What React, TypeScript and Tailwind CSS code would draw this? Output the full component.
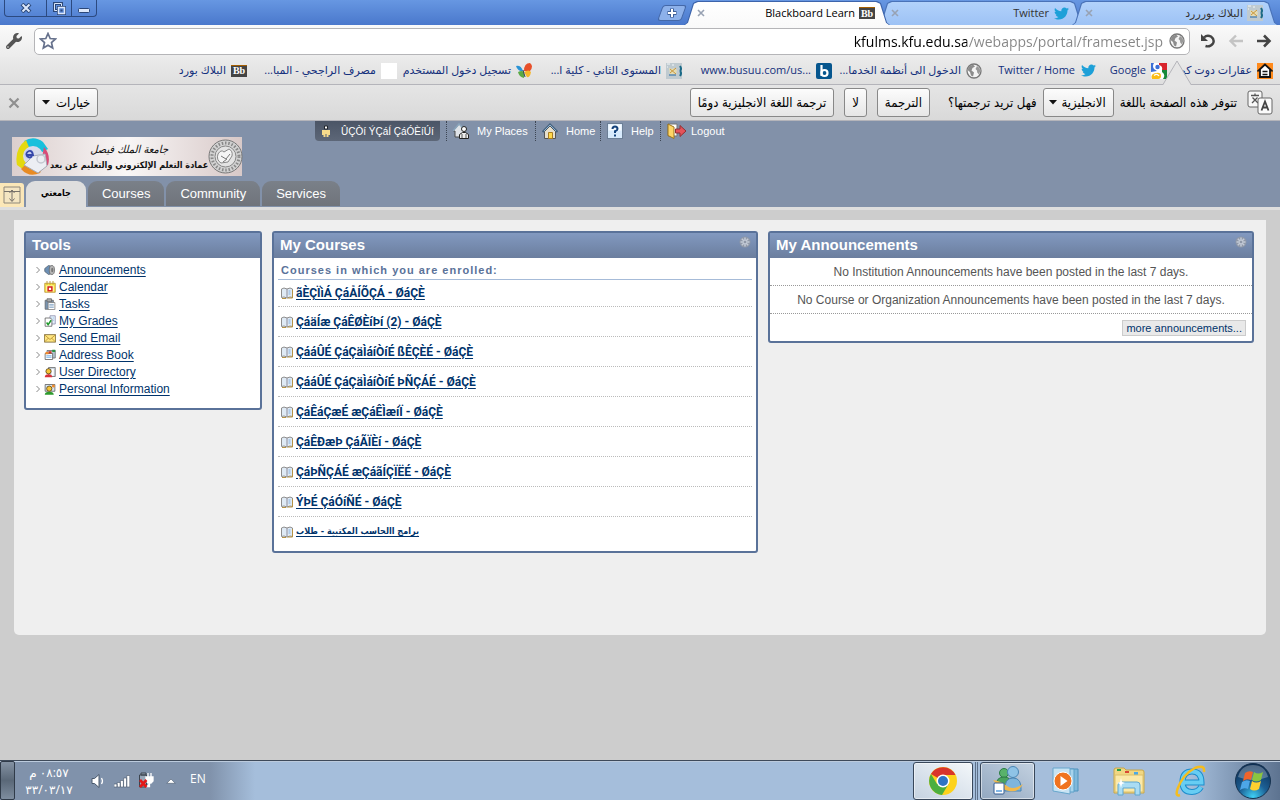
import type { ReactNode } from "react";
import { FaTwitter, FaWrench } from "react-icons/fa";

/* ---------- small icons ---------- */

const Svg = ({ size = 16, children }: { size?: number; children: ReactNode }) => (
  <svg width={size} height={size} viewBox="0 0 16 16" className="shrink-0" aria-hidden="true">
    {children}
  </svg>
);

const BbIcon = () => (
  <span
    aria-hidden="true"
    className="flex h-3 w-4 shrink-0 items-center justify-center border-t border-yellow-700 bg-[#444] font-['Liberation_Serif',serif] text-[10px] leading-3 font-bold text-white"
  >
    Bb
  </span>
);

const GlobeIcon = () => (
  <Svg>
    <circle cx="8" cy="8" r="7" fill="#f4f4f4" stroke="#777" strokeWidth="1.3" />
    <path d="M3 3.500 7 1.500l2 2-2.500 1.500L5.500 7.500 8 9.500 7 13.500 5 12.500 4 9 1.500 7z" fill="#8c8c8c" />
    <path d="m11 3 2.500 2 .8 3-1.300 3.500-1.800-2-.2-2-1.500-1.500z" fill="#999" />
  </Svg>
);

const SchoolIcon = () => (
  <Svg>
    <rect width="16" height="16" fill="#bfcad0" />
    <path d="m3 5 3 1 2-1 3 2-1 5H4z" fill="#e4dcb4" />
    <path d="m4 10 6-5M4 6l6 5" stroke="#c9973c" />
    <path d="M14 3q2 3 0 5M14 8q2 2 0 5" stroke="#1b6a87" strokeWidth="2" fill="none" />
    <path d="M3 12h7" stroke="#5687b4" strokeWidth="1.500" />
    <path d="M1 1h3M6 2h2M1 4h1" stroke="#f3f7f8" />
  </Svg>
);

const HouseBadge = () => (
  <Svg>
    <rect width="16" height="16" fill="#ff8a1c" />
    <path d="M8 1.500 1.500 7.500H3V14h10V7.500h1.500z" fill="#fff" stroke="#151515" strokeWidth="1.800" />
    <path d="M5.500 8.500h5M5.500 11.500h5" stroke="#151515" strokeWidth="1.600" />
  </Svg>
);

const GoogleIcon = () => (
  <Svg>
    <rect width="16" height="16" rx="1" fill="#fff" />
    <path d="M0 0h3Q1 3 3 6l3 2-6 1z" fill="#3b6fd6" />
    <path d="M8 0h8v7h-5Q12 3 8 2z" fill="#d8242c" />
    <path d="M11 7h5v9h-4q3-4-1-7z" fill="#17893a" />
    <path d="M1 16q-2-5 4-6 5-1 5 3 0 3-3 3z" fill="#fbbc14" />
    <circle cx="6.500" cy="4" r="2.200" fill="#3b6fd6" />
    <path d="M3 12.500q3-2.500 5 .5" fill="none" stroke="#fff" strokeWidth="1.200" />
  </Svg>
);

const BusuuIcon = () => (
  <Svg>
    <rect width="16" height="16" rx="2" fill="#06568e" />
    <path d="M5.500 2v11" stroke="#fff" strokeWidth="2.200" />
    <circle cx="8.500" cy="10" r="3" fill="none" stroke="#fff" strokeWidth="2.200" />
  </Svg>
);

const ButterflyIcon = () => (
  <Svg>
    <path d="M0 3q5-1 7 5-5 1-7-5z" fill="#2a93d5" />
    <path d="M8 8Q8 0 14 0q4 3 0 8z" fill="#e8502a" />
    <path d="M8 9q5-3 7 0-1 6-4 5z" fill="#f5b72b" />
    <path d="M2 9q4-2 6 0v6q-5-1-6-6z" fill="#5ba944" />
    <path d="m7 7 2 7" stroke="#345" />
  </Svg>
);

const TranslateIcon = () => (
  <svg width="26" height="26" viewBox="0 0 26 26" className="shrink-0" aria-hidden="true">
    <rect x="1" y="1" width="14" height="16" rx="2" fill="#f8f8f8" stroke="#666" />
    <path d="M4 5.500h8M8 3.500v2M5.500 7.500 11 13M10.500 7.500 5 13" stroke="#555" strokeWidth="1.300" fill="none" />
    <rect x="11" y="8" width="14" height="16" rx="2" fill="#fafafa" stroke="#666" />
    <path d="m14.500 20.500 3.500-9 3.500 9M16 17.500h4" stroke="#444" strokeWidth="1.800" fill="none" />
  </svg>
);

const CloseX = () => (
  <svg width="8" height="8" viewBox="0 0 8 8" aria-hidden="true">
    <path d="m1 1 6 6M7 1 1 7" stroke="currentColor" strokeWidth="1.600" />
  </svg>
);

const Caret = () => (
  <svg width="8" height="5" viewBox="0 0 8 5" className="shrink-0" aria-hidden="true">
    <path d="M0 0h8L4 4.500z" fill="#111" />
  </svg>
);

const Bullet = () => (
  <svg width="4" height="8" viewBox="0 0 4 8" className="shrink-0" aria-hidden="true">
    <path d="m.5 1 3 3-3 3" fill="none" stroke="#888" />
  </svg>
);

const Gear = () => (
  <svg width="12" height="12" viewBox="0 0 12 12" aria-hidden="true">
    <circle cx="6" cy="6" r="5.500" fill="#8f98a8" />
    <path d="M6 1.500v9M1.500 6h9M2.800 2.800l6.400 6.400M9.200 2.800 2.800 9.200" stroke="#c3cad6" strokeWidth="1.500" />
    <circle cx="6" cy="6" r="1.300" fill="#8f98a8" />
  </svg>
);

const BookIcon = () => (
  <svg width="12" height="12" viewBox="0 0 12 12" className="shrink-0" aria-hidden="true">
    <path d="M.5 2 3 1l3 1 3-1 2.500 1v8.500L9 10l-3 1-3-1-2.500.5z" fill="#dfeaf5" stroke="#8d8d8d" />
    <path d="M11.500 3v8H6.500" fill="none" stroke="#b59243" />
    <path d="M6 2v8.500" stroke="#8c8c9a" />
    <path d="M7.500 3h2v5h-2z" fill="#b0cdea" />
    <path d="M1 11.500h4" stroke="#b59243" />
  </svg>
);

const MyPlacesIcon = () => (
  <Svg>
    <path d="m0 8 6-7 6 6v7H2V8z" fill="#dfe3e8" stroke="#4a4a4a" />
    <path d="m0 8 6-7 7 7" fill="none" stroke="#8ba6bd" strokeWidth="1.500" />
    <circle cx="11" cy="6" r="2.500" fill="#fff" stroke="#222" />
    <path d="M6.500 15.500v-4l3-2h3l3 2v4z" fill="#eee" stroke="#222" />
    <path d="M9 11v4m4-4v4" stroke="#555" />
  </Svg>
);

const HomeIcon = () => (
  <Svg>
    <path d="M2.500 8.500 8 3l5.500 5.500v7h-11z" fill="#e6dfcd" stroke="#555" />
    <path d="m.5 9 7.500-7.500L15.500 9" fill="none" stroke="#45627e" strokeWidth="2" />
    <path d="m2 8 6-6 6 6" fill="none" stroke="#8fb3d3" />
    <path d="M6.500 9.500h4v6h-4z" fill="#ffd84a" stroke="#a97c20" />
  </Svg>
);

const HelpIcon = () => (
  <Svg>
    <rect x=".5" y=".5" width="15" height="15" fill="#d7eafc" stroke="#6c7f96" />
    <path d="M1.500 1.500h13v6h-13z" fill="#f4faff" />
    <path d="M5.500 6q0-2.500 2.500-2.500T10.500 6q0 1.300-2.500 2.300V10" fill="none" stroke="#13427c" strokeWidth="2" />
    <path d="M7 11.500h2v2H7z" fill="#13427c" />
  </Svg>
);

const LogoutIcon = () => (
  <svg width="20" height="16" viewBox="0 0 20 16" className="shrink-0" aria-hidden="true">
    <path d="M1 1h9v12H1z" fill="#fff" stroke="#777" />
    <path d="m1 1 6 3v11.500L1 12.500z" fill="#ffd667" stroke="#9b741f" />
    <path d="M8.500 6H13V2.500l6 5.500-6 5.500V10H8.500z" fill="#e5535a" stroke="#8e3034" />
  </svg>
);

const PersonIcon = () => (
  <svg width="10" height="12" viewBox="0 0 10 12" className="shrink-0" aria-hidden="true">
    <path d="M3.500 1h3v3h-3z" fill="#fff" stroke="#20242b" />
    <path d="M1 5h8v5H7.500v2h-2V9h-1v3h-2v-2H1z" fill="#f6da8b" />
  </svg>
);

const toolIcons: Record<string, ReactNode> = {
  Announcements: (
    <>
      <path d="m1 6 5-4 4 1v10l-4 1-5-4z" fill="#6b8fb5" stroke="#56606b" />
      <ellipse cx="10.500" cy="8" rx="3.500" ry="6" fill="#b7b7b7" stroke="#666" />
      <ellipse cx="11" cy="8" rx="1.500" ry="3" fill="#777" />
    </>
  ),
  Calendar: (
    <>
      <path d="M1 3h14v12H1z" fill="#fce94b" stroke="#b18a2c" />
      <path d="M4 0v5m4-5v5m4-5v5" stroke="#bb9c3c" strokeWidth="1.300" />
      <path d="M3 6h10v8H3z" fill="#fff6b0" />
      <path d="M5.500 8h5v5h-5z" fill="#fff" stroke="#d52121" strokeWidth="2" />
    </>
  ),
  Tasks: (
    <>
      <path d="M1.500 3h11v12h-11z" fill="#7994b0" stroke="#666" />
      <path d="M4 1h6v4H4z" fill="#aaa" stroke="#666" />
      <path d="M5.500 6h9v9.500h-9z" fill="#fff" stroke="#777" />
      <path d="M7 8.500h6M7 10.500h6M7 12.500h6" stroke="#6d96bd" />
    </>
  ),
  "My Grades": (
    <>
      <path d="M8 1h7v11H8z" fill="#e4f0fb" stroke="#88a" />
      <path d="M10 4h4M10 7h4" stroke="#6aa1d6" strokeDasharray="1 1" />
      <path d="M1.500 4h7l2 2v9h-9z" fill="#fff" stroke="#555" />
      <path d="m3.500 10 2 3 4-6" fill="none" stroke="#1f9a2b" strokeWidth="2" />
    </>
  ),
  "Send Email": (
    <>
      <path d="M.5 3.500h15v10H.5z" fill="#ffe680" stroke="#6a5628" />
      <path d="m1 4 7 6 7-6M1 13l5-5m9 5-5-5" fill="none" stroke="#b38a2b" />
    </>
  ),
  "Address Book": (
    <>
      <path d="M4 2h11v10H4z" fill="#b5c4d2" stroke="#666" />
      <path d="M1.500 6h10v8h-10z" fill="#fff" stroke="#555" />
      <path d="M6 3h4v3H6z" fill="#d33a26" />
      <path d="M11 1h4v3h-4z" fill="#2c9142" />
      <path d="M2 4h4v3H2z" fill="#f08a2a" />
      <path d="M3 9h7M3 11h7" stroke="#4f9ee0" />
    </>
  ),
  "User Directory": (
    <>
      <path d="M6 2h9v12H6z" fill="#c8d3dd" stroke="#666" />
      <path d="M10 4h3v9h-3z" fill="#fff" />
      <circle cx="6" cy="7" r="3.500" fill="#f6c437" stroke="#4e3a10" />
      <path d="M1 15q0-4 5-4t5 4z" fill="#d8323a" />
    </>
  ),
  "Personal Information": (
    <>
      <path d="M1.500 2h13v9h-13z" fill="#d9e6f3" stroke="#555" />
      <circle cx="12.500" cy="4" r="2" fill="#f08a2a" />
      <circle cx="7" cy="7.500" r="3.500" fill="#f6c437" stroke="#4e3a10" />
      <path d="M1 15.500q0-4 6-4t6 4z" fill="#2e9b2e" />
    </>
  ),
};

/* ---------- browser window ---------- */

const browserTabs = [
  { title: "البلاك بورررد", icon: <SchoolIcon />, active: false, z: "z-10" },
  { title: "Twitter", icon: <FaTwitter size={15} color="#1da0d8" />, active: false, z: "z-0" },
  { title: "Blackboard Learn", icon: <BbIcon />, active: true, z: "z-20" },
];

const tabClip = "[clip-path:polygon(0_100%,3px_90%,9px_8%,13px_0,calc(100%_-_13px)_0,calc(100%_-_9px)_8%,calc(100%_-_3px)_90%,100%_100%)]";

const TabStrip = () => (
  <div className="flex h-[25px] items-end bg-gradient-to-b from-[#6797e2] to-[#4a78cc] pr-[2px] pl-1">
    {browserTabs.map((tab) => (
      <div key={tab.title} className={`relative flex h-6 w-[206px] items-center gap-1 pr-[15px] pl-[13px] not-first:-mr-3 ${tab.z}`}>
        <span className={`absolute inset-0 ${tab.active ? "bg-[#3d64ab]" : "bg-[#4a73b8]"} ${tabClip}`} />
        <span
          className={`absolute inset-x-px top-px bottom-0 ${tab.active ? "bg-gradient-to-b from-white to-[#fafafa]" : "bg-gradient-to-b from-[#b2d2fb] to-[#9dc2f5]"} ${tabClip}`}
        />
        <span className="relative flex w-4 shrink-0 justify-center">{tab.icon}</span>
        <span className={`relative grow text-[11px] whitespace-nowrap ${tab.active ? "text-black" : "text-[#333]"}`}>{tab.title}</span>
        <button aria-label="إغلاق" className="relative text-[#98a2b3]">
          <CloseX />
        </button>
      </div>
    ))}
    <button aria-label="علامة تبويب جديدة" className="mb-1 flex h-4 w-6 -skew-x-[20deg] items-center justify-center rounded-[3px] border border-[#4468a8] bg-[#8db1ea]">
      <svg width="10" height="10" viewBox="0 0 10 10" className="skew-x-[20deg]" aria-hidden="true">
        <path d="M5 .5v9M.5 5h9" stroke="#3f5f96" strokeWidth="4" />
        <path d="M5 1v8M1 5h8" stroke="#fff" strokeWidth="2" />
      </svg>
    </button>
    <div className="mr-auto flex h-[17px] self-start overflow-hidden rounded-b-[4px] border border-t-0 border-[#2c4a80] text-[#2b4778]">
      <button aria-label="تصغير" className="flex w-[25px] items-end justify-center border-l border-[#2c4a80] pb-[3px]">
        <svg width="12" height="5" viewBox="0 0 12 5" aria-hidden="true">
          <rect x=".5" y=".5" width="11" height="4" rx="1" fill="#dce8fb" stroke="currentColor" />
        </svg>
      </button>
      <button aria-label="استعادة" className="flex w-[25px] items-center justify-center border-l border-[#2c4a80]">
        <svg width="13" height="13" viewBox="0 0 13 13" aria-hidden="true">
          <path d="M1.500 1.500h7v7h-7z" fill="none" stroke="currentColor" strokeWidth="3" />
          <path d="M1.500 1.500h7v7h-7z" fill="none" stroke="#dce8fb" />
          <path d="M5.500 5.500h6v6h-6z" fill="#5c8ad8" stroke="currentColor" strokeWidth="3" />
          <path d="M5.500 5.500h6v6h-6z" fill="#5c8ad8" stroke="#dce8fb" strokeWidth="1.500" />
          <path d="M7.500 7.500h2v2h-2z" fill="currentColor" />
        </svg>
      </button>
      <button aria-label="إغلاق النافذة" className="flex w-[41px] items-center justify-center">
        <svg width="12" height="10" viewBox="0 0 12 10" aria-hidden="true">
          <path d="m2 1 8 8m0-8-8 8" stroke="currentColor" strokeWidth="4" />
          <path d="m2.500 1.500 7 7m0-7-7 7" stroke="#dce8fb" strokeWidth="2" />
        </svg>
      </button>
    </div>
  </div>
);

const Toolbar = () => (
  <div className="flex h-8 items-center bg-gradient-to-b from-[#fafafa] to-[#ececec] px-1">
    <button aria-label="التالي" className="flex w-6 justify-center">
      <svg width="16" height="14" viewBox="0 0 16 14" aria-hidden="true">
        <path d="M1 7h12M8 1.500 13.500 7 8 12.500" fill="none" stroke="#444" strokeWidth="2.600" />
      </svg>
    </button>
    <button aria-label="السابق" className="flex w-8 justify-center">
      <svg width="16" height="14" viewBox="0 0 16 14" aria-hidden="true">
        <path d="M15 7H3m5-5.500L2.500 7 8 12.500" fill="none" stroke="#c4c4c4" strokeWidth="2.400" />
      </svg>
    </button>
    <button aria-label="تحديث" className="ml-[6px] flex w-6 justify-center">
      <svg width="16" height="16" viewBox="0 0 16 16" aria-hidden="true">
        <path d="M4 4.500q3-3 7-1 4 3 2 7-3 4-7.500 2.500" fill="none" stroke="#444" strokeWidth="2.400" />
        <path d="M1 1v7h7z" fill="#444" />
      </svg>
    </button>
    <div className="flex h-[27px] grow items-center gap-1 rounded-[5px] border border-[#b5b5b8] bg-white px-1">
      <GlobeIcon />
      <input
        aria-label="العنوان"
        dir="ltr"
        defaultValue="kfulms.kfu.edu.sa/webapps/portal/frameset.jsp"
        className="min-w-0 grow bg-[linear-gradient(to_left,#858585_198px,#000_198px)] bg-clip-text pr-[2px] text-right text-[14px] text-transparent outline-none"
      />
      <button aria-label="إشارة مرجعية">
        <svg width="18" height="18" viewBox="0 0 18 18" aria-hidden="true">
          <path d="m9 1.500 2.200 5 5.300.5-4 3.600 1.200 5.400L9 13.200 4.300 16l1.200-5.400-4-3.600 5.300-.5z" fill="#fff" stroke="#66718c" strokeWidth="1.700" />
        </svg>
      </button>
    </div>
    <button aria-label="أدوات" className="flex w-[30px] items-center justify-center pr-[10px] text-[#555]">
      <FaWrench size={16} className="-scale-x-100 rotate-90" />
    </button>
  </div>
);

const bookmarks = [
  { title: "عقارات دوت كو", icon: <HouseBadge />, width: "w-[106px]" },
  { title: "Google", icon: <GoogleIcon />, width: "w-[71px]" },
  { title: "Twitter / Home", icon: <FaTwitter size={15} color="#1da0d8" />, width: "w-[114px]" },
  { title: "الدخول الى أنظمة الخدما...", icon: <GlobeIcon />, width: "w-[150px]" },
  { title: "www.busuu.com/us...", icon: <BusuuIcon />, width: "w-[150px]", ltr: true },
  { title: "المستوى الثاني - كلية ا...", icon: <SchoolIcon />, width: "w-[150px]" },
  { title: "تسجيل دخول المستخدم", icon: <ButterflyIcon />, width: "w-[135px]" },
  { title: "مصرف الراجحي - المبا...", icon: <span className="size-4 bg-white" />, width: "w-[150px]" },
  { title: "البلاك بورد", icon: <BbIcon />, width: "w-[80px]" },
];

const BookmarksBar = () => (
  <nav aria-label="الإشارات المرجعية" className="flex h-[27px] items-center overflow-hidden bg-gradient-to-b from-[#ebebeb] to-[#dfdfdf] pr-[7px]">
    {bookmarks.map((mark) => (
      <a key={mark.title} href="#" className={`flex shrink-0 items-center gap-[5px] text-[11px] whitespace-nowrap text-[#14307c] ${mark.width}`}>
        <span className="flex w-4 shrink-0 justify-center">{mark.icon}</span>
        <span dir={mark.ltr ? "ltr" : undefined}>{mark.title}</span>
      </a>
    ))}
  </nav>
);

const barButton = "flex h-[29px] items-center rounded-[3px] border border-[#888] bg-gradient-to-b from-[#fcfcfc] to-[#e6e6e6] px-[7px] whitespace-nowrap";

const TranslateBar = () => (
  <div className="relative flex h-[37px] items-center border-y border-[#b4b4ba] bg-gradient-to-b from-[#e5e5e5] to-[#d9d9d9] pr-[7px] pl-2 font-['DejaVu_Sans_Condensed','DejaVu_Sans',sans-serif] text-[13px] text-black">
    <svg width="28" height="25" viewBox="0 0 28 25" className="absolute -top-[25px] right-[89px]" aria-hidden="true">
      <path d="M0 25 14 1l14 24z" fill="#e5e5e5" />
      <path d="M0 24.500 14 1l14 23.500" fill="none" stroke="#b4b4ba" />
    </svg>
    <TranslateIcon />
    <label htmlFor="page-language" className="mr-[10px] whitespace-nowrap">
      تتوفر هذه الصفحة باللغة
    </label>
    <span className="relative mr-[6px] flex items-center">
      <select id="page-language" className={`${barButton} w-[71px] appearance-none`}>
        <option>الانجليزية</option>
      </select>
      <span className="pointer-events-none absolute left-[6px]">
        <Caret />
      </span>
    </span>
    <span className="mr-[6px] whitespace-nowrap">فهل تريد ترجمتها؟</span>
    <button className={`${barButton} mr-[18px]`}>الترجمة</button>
    <button className={`${barButton} mr-[10px]`}>لا</button>
    <button className={`${barButton} mr-[10px]`}>ترجمة اللغة الانجليزية دومًا</button>
    <button className={`${barButton} mr-auto gap-[6px]`}>
      خيارات
      <Caret />
    </button>
    <button aria-label="إغلاق" className="mr-[14px] text-[#909090]">
      <svg width="12" height="12" viewBox="0 0 12 12" aria-hidden="true">
        <path d="m1.500 1.500 9 9m0-9-9 9" stroke="currentColor" strokeWidth="2.200" />
      </svg>
    </button>
  </div>
);

/* ---------- portal ---------- */

const Logo = () => (
  <div className="flex h-[39px] w-[230px] items-center justify-between bg-gradient-to-r from-[#dccfce] via-[#f8f6f6] to-[#d8c9c8] px-1">
    <svg width="34" height="39" viewBox="0 0 34 39" className="shrink-0" aria-hidden="true">
      <path d="M17 20 8 4Q18-2 27 5l5 7z" fill="#17c0dc" />
      <path d="M17 20 10 3Q-2 12 1 28l7 5z" fill="#e3d90f" />
      <path d="M17 20 5 32q8 9 19 4l4-8z" fill="#e88b23" />
      <path d="m28 10q7 8 4 18l-8 3z" fill="#d84b78" />
      <circle cx="17" cy="19" r="10" fill="#d7dbea" />
      <path d="m17 19 12-2 2 12-9 7-14-8z" fill="#eceef3" stroke="#a6abb8" />
      <circle cx="13" cy="17" r="5" fill="#c6cdf2" />
      <path d="M10 18h7q-1-5-4-4-4 2-2 5 3 3 5 0" fill="none" stroke="#3446a8" strokeWidth="1.800" />
      <circle cx="25" cy="22" r="4" fill="none" stroke="#c3c7d0" strokeWidth="1.500" />
    </svg>
    <div className="flex flex-col items-center font-['DejaVu_Sans_Condensed','DejaVu_Sans',sans-serif] whitespace-nowrap text-[#111]" dir="rtl">
      <span className="text-[11px] leading-[16px] italic">جامعة الملك فيصل</span>
      <span className="text-[9px] leading-[14px] font-bold">عمادة التعلم الإلكتروني والتعليم عن بعد</span>
    </div>
    <svg width="35" height="37" viewBox="0 0 35 37" className="shrink-0" aria-hidden="true">
      <circle cx="17.500" cy="18.500" r="16.500" fill="#d2d2d2" stroke="#777" />
      <circle cx="17.500" cy="18.500" r="13.500" fill="none" stroke="#888" strokeWidth="3" strokeDasharray="1.500 1.800" />
      <circle cx="17.500" cy="18.500" r="10.500" fill="#e3e3e3" stroke="#888" />
      <path d="M10 16q3-5 6-2l5-3q4 2 3 7l-4 6-7 1q-5-3-3-9z" fill="#f4f4f4" stroke="#888" />
      <path d="m13 18 5 3 4-5m-7 8 4-3" fill="none" stroke="#777" />
    </svg>
  </div>
);

const headerLinks = [
  { label: "My Places", icon: <MyPlacesIcon />, width: "w-[89px]" },
  { label: "Home", icon: <HomeIcon />, width: "w-[65px]" },
  { label: "Help", icon: <HelpIcon />, width: "w-[60px]" },
  { label: "Logout", icon: <LogoutIcon />, width: "w-[70px]" },
];

const portalTabs = ["جامعتي", "Courses", "Community", "Services"];

const PortalHeader = () => (
  <header className="relative border-b-[3px] border-[#dedede] bg-[#8291a9]">
    <div className="absolute top-0 left-[315px] flex h-5 text-[11px] text-white">
      <span className="flex w-[125px] items-center gap-[10px] rounded-b-[4px] bg-gradient-to-b from-[#4b5566] to-[#5d6778] px-[6px] text-[10px] whitespace-nowrap">
        <PersonIcon />
        ÛÇÒí ÝÇáÍ ÇáÓÈíÚí
      </span>
      <nav className="ml-[6px] flex">
        {headerLinks.map((link) => (
          <a key={link.label} href="#" className={`flex items-center gap-2 border-l border-dotted border-[#3d4654] pl-[6px] whitespace-nowrap last:gap-1 ${link.width}`}>
            {link.icon}
            {link.label}
          </a>
        ))}
      </nav>
    </div>
    <div className="px-3 pt-4">
      <Logo />
    </div>
    <div className="mt-[5px] flex items-end">
      <button aria-label="Toggle header" className="mr-[2px] flex h-6 w-6 items-center justify-center rounded-tr-[3px] bg-[#fbe7b8]">
        <svg width="18" height="18" viewBox="0 0 18 18" aria-hidden="true">
          <path d="M1 1h16v16H1z" fill="#f4e5c2" stroke="#8f887b" />
          <path d="M1 5.500h16M9 4v11M6.500 7 9 4l2.500 3M6.500 12.500 9 15.500l2.500-3" fill="none" stroke="#77716a" />
        </svg>
      </button>
      <nav className="flex gap-[2px]">
        {portalTabs.map((tab, index) => (
          <a
            key={tab}
            href="#"
            className={
              index === 0
                ? "flex h-[26px] items-center rounded-t-[9px] bg-[#dedede] px-[15px] font-['DejaVu_Sans_Condensed','DejaVu_Sans',sans-serif] text-[9px] font-bold text-black"
                : "mb-px flex h-[25px] items-center rounded-t-[9px] bg-gradient-to-b from-[#7a8089] to-[#70747b] px-[14px] text-[13px] text-white"
            }
          >
            {tab}
          </a>
        ))}
      </nav>
    </div>
  </header>
);

const Module = ({ title, gear, children }: { title: string; gear?: boolean; children: ReactNode }) => (
  <section className="rounded-[3px] border-2 border-[#5a7299] bg-white">
    <div className="flex h-[25px] items-start justify-between bg-gradient-to-b from-[#8299c0] to-[#6b7e9e] pr-[5px] pl-[6px]">
      <h2 className="text-[15px] leading-6 font-bold text-white">{title}</h2>
      {gear && (
        <button aria-label={`Manage ${title}`} className="mt-[3px]">
          <Gear />
        </button>
      )}
    </div>
    {children}
  </section>
);

const courses = [
  "ãÈÇÏìÁ ÇáÅÍÕÇÁ - ØáÇÈ",
  "ÇáäÍæ ÇáÊØÈíÞí (2) - ØáÇÈ",
  "ÇááÛÉ ÇáÇäÌáíÒíÉ ßÊÇÈÉ - ØáÇÈ",
  "ÇááÛÉ ÇáÇäÌáíÒíÉ ÞÑÇÁÉ - ØáÇÈ",
  "ÇáÊáÇæÉ æÇáÊÌæíÏ - ØáÇÈ",
  "ÇáÊÐæÞ ÇáÃÏÈí - ØáÇÈ",
  "ÇáÞÑÇÁÉ æÇáãÍÇÏËÉ - ØáÇÈ",
  "ÝÞÉ ÇáÓíÑÉ - ØáÇÈ",
];

const notices = [
  "No Institution Announcements have been posted in the last 7 days.",
  "No Course or Organization Announcements have been posted in the last 7 days.",
];

const courseRow = "flex h-[30px] items-center gap-[3px] border-b border-dotted border-[#bbb] px-[3px] first:h-[27px] last:border-0";
const courseLink = "font-bold text-[#00336b] underline underline-offset-2";

const Portal = () => (
  <main className="mx-[14px] mt-[10px] min-h-[415px] rounded-b-[5px] bg-[#efefef] pt-[11px] pr-3 pb-3 pl-[10px]">
    <div className="grid grid-cols-[238px_1fr_1fr] items-start gap-[10px]">
      <Module title="Tools">
        <ul className="pt-[3px] pb-[11px] pl-[10px]">
          {Object.keys(toolIcons).map((tool) => (
            <li key={tool} className="flex h-[17px] items-center">
              <Bullet />
              <span className="mr-[3px] ml-1">
                <Svg size={12}>{toolIcons[tool]}</Svg>
              </span>
              <a href="#" className="text-[12px] text-[#00336b] underline underline-offset-2">
                {tool}
              </a>
            </li>
          ))}
        </ul>
      </Module>

      <Module title="My Courses" gear>
        <div className="px-1 pb-1">
          <h3 className="border-b border-[#a6bbd8] px-[3px] pt-1 text-[11px] leading-[17px] font-bold tracking-[1px] text-[#5a7299]">
            Courses in which you are enrolled:
          </h3>
          <ul>
            {courses.map((course) => (
              <li key={course} className={courseRow}>
                <BookIcon />
                <a href="#" className={`${courseLink} font-['Roboto','Liberation_Sans',sans-serif] text-[12px]`}>
                  {course}
                </a>
              </li>
            ))}
            <li className={courseRow}>
              <BookIcon />
              <a href="#" className={`${courseLink} font-['DejaVu_Sans_Condensed','DejaVu_Sans',sans-serif] text-[9px]`}>
                برامج االحاسب المكتبية - طلاب
              </a>
            </li>
          </ul>
        </div>
      </Module>

      <Module title="My Announcements" gear>
        {notices.map((notice) => (
          <p key={notice} className="flex h-7 items-center justify-center border-b border-dotted border-[#999] text-[12px] text-[#555]">
            {notice}
          </p>
        ))}
        <div className="flex justify-end px-[6px] pt-[6px] pb-[5px]">
          <a href="#" className="border border-[#ccc] bg-[#e9e9e9] px-[3px] text-[11px] leading-[14px] text-[#00336b]">
            more announcements...
          </a>
        </div>
      </Module>
    </div>
  </main>
);

/* ---------- taskbar ---------- */

const StartOrb = () => (
  <svg width="38" height="38" viewBox="0 0 38 38" aria-hidden="true">
    <defs>
      <radialGradient id="orb" cx=".5" cy=".95" r=".9">
        <stop offset="0" stopColor="#3fd0f5" />
        <stop offset=".45" stopColor="#1c5f94" />
        <stop offset="1" stopColor="#0d2f55" />
      </radialGradient>
    </defs>
    <circle cx="19" cy="19" r="17.500" fill="url(#orb)" stroke="#16324f" />
    <path d="M4 15Q7 3 19 3t15 12q-15 6-30 0z" fill="#fff" opacity=".28" />
    <path d="M11 11q4-3 8-1l-2 8q-4-2-8 1z" fill="#f0642b" />
    <path d="M20 10q4 3 9 0l-2 8q-5 3-9 0z" fill="#8bc53f" />
    <path d="M8 20q4-3 8-1l-2 8q-4-2-8 1z" fill="#4da6e8" />
    <path d="M18 19q4 3 9 0l-2 8q-5 3-9 0z" fill="#fcd030" />
  </svg>
);

const IeIcon = () => (
  <svg width="32" height="32" viewBox="0 0 32 32" aria-hidden="true">
    <path d="M9 17.500h17.500q0-11-9.500-11T7.500 17q0 10 9.500 10 6 0 9-5" fill="none" stroke="#1c8ccb" strokeWidth="6" />
    <path d="M9 17.500h17.500q0-11-9.500-11T7.500 17q0 10 9.500 10 6 0 9-5" fill="none" stroke="#67cdf3" strokeWidth="4" />
    <path d="M5 30Q0 32 2.500 24 8 9 20 3q10-4 9 4" fill="none" stroke="#f4bd20" strokeWidth="2.500" />
  </svg>
);

const ExplorerIcon = () => (
  <svg width="34" height="30" viewBox="0 0 34 30" aria-hidden="true">
    <path d="M2 4q0-2 2-2h8l2 2h16q2 0 2 2v21H2z" fill="#f1d782" stroke="#c7a648" />
    <path d="M5 3h4v2H5z" fill="#27a146" />
    <path d="M13 5h4v2h-4z" fill="#d94835" />
    <path d="M22 6h4v3h-4z" fill="#4aa9e6" />
    <path d="M3 9h28v17H3z" fill="#fbe9a8" stroke="#dcc06a" />
    <path d="M6 29V19q0-3 3-3h16q3 0 3 3v10h-5v-7H11v7z" fill="#a9dcf3" stroke="#5fa6cf" />
    <path d="m9 12 1 4 3 1-3 1-1 4-1-4-3-1 3-1z" fill="#fff" />
  </svg>
);

const PlayerIcon = () => (
  <svg width="30" height="30" viewBox="0 0 30 30" aria-hidden="true">
    <path d="M14 3h12v22H14z" fill="#7fb8da" stroke="#4f93bd" />
    <path d="M9 3h13v23H9z" fill="#a7d3eb" stroke="#5b9fc8" />
    <path d="M1 2h17v26L1 25z" fill="#c7e3f3" stroke="#66a6cc" />
    <circle cx="11" cy="15" r="9" fill="#f0731f" stroke="#fff" />
    <path d="m8.500 10 7 5-7 5z" fill="#fff" />
  </svg>
);

const MessengerIcon = () => (
  <svg width="32" height="30" viewBox="0 0 32 30" aria-hidden="true">
    <circle cx="12" cy="7" r="4.500" fill="#59b26b" stroke="#2c7d44" />
    <path d="M4 20q0-9 8-9t8 9z" fill="#4ba35f" stroke="#2c7d44" />
    <circle cx="21" cy="6" r="5.500" fill="#8fc3e6" stroke="#4a85b3" />
    <path d="M13 25q-1-13 8-13t8 13z" fill="#7eb5dc" stroke="#4a85b3" />
    <path d="M1 14q8 1 14 6t16-2q-5 9-14 7T1 14z" fill="#f2b94b" />
    <rect x="2" y="17" width="10" height="11" rx="1" fill="#fff" stroke="#335d92" />
    <path d="M4 24h6v2H4z" fill="#83b7e6" />
  </svg>
);

const ChromeIcon = () => (
  <svg width="30" height="30" viewBox="0 0 30 30" aria-hidden="true">
    <circle cx="15" cy="15" r="14" fill="#fdd21c" />
    <path d="M15 15 2.900 8A14 14 0 0 1 27.500 9H15z" fill="#d8352b" />
    <path d="M3 8a14 14 0 0 0 11 21l6.500-11L15 15 9 18z" fill="#4caf3f" />
    <circle cx="15" cy="15" r="6.500" fill="#fff" />
    <circle cx="15" cy="15" r="5" fill="#2e74c4" />
  </svg>
);

const taskButton = "flex h-[38px] items-center justify-center rounded-[3px] border border-[#38475a] ring-1 ring-white/50 ring-inset";

const Taskbar = () => (
  <footer
    dir="rtl"
    className="mt-auto flex h-10 items-center border-t border-[#3e4a5a] bg-[linear-gradient(to_right,#8092ab_0,#8092ab_210px,#a5bedb_255px,#a5bedb_calc(100%_-_90px),#5d7390_100%)] font-['Open_Sans','DejaVu_Sans',sans-serif] shadow-[inset_0_1px_0_#bccbdd]"
  >
    <button aria-label="Start" className="flex w-[54px] justify-center">
      <StartOrb />
    </button>
    <button aria-label="Internet Explorer" className="mr-1 flex w-[62px] justify-center">
      <IeIcon />
    </button>
    <button aria-label="Windows Explorer" className="flex w-[62px] justify-center">
      <ExplorerIcon />
    </button>
    <button aria-label="Media Player" className="flex w-[62px] justify-center">
      <PlayerIcon />
    </button>
    <button aria-label="Messenger" className={`${taskButton} mr-[1px] w-[55px] bg-gradient-to-tr from-[#93a8c0] to-[#c3d1e0]`}>
      <MessengerIcon />
    </button>
    <span className="mr-[2px] h-[38px] w-[3px] border-x border-[#5c7089]" />
    <button aria-label="Chrome" className={`${taskButton} mr-[2px] w-[60px] bg-gradient-to-tr from-[#c5d2e0] to-[#f3f7fa]`}>
      <ChromeIcon />
    </button>

    <div dir="ltr" className="mr-auto flex h-full items-center text-white">
      <button aria-label="Show desktop" className="h-full w-[15px] rounded-[2px] border border-[#303b49] bg-gradient-to-b from-[#8492a3] via-[#5a6878] to-[#7e8d9f]" />
      <div className="flex w-[68px] flex-col items-center text-[12px] leading-[17px]">
        <span dir="rtl">٠٨:٥٧ م</span>
        <span>٣٣/٠٣/١٧</span>
      </div>
      <svg width="14" height="16" viewBox="0 0 14 16" className="ml-2" aria-hidden="true">
        <path d="M1 5.500h2.500L8 1.500v13l-4.500-4H1z" fill="#fff" stroke="#48586c" />
        <path d="M10.500 5q2 3 0 6" fill="none" stroke="#fff" strokeWidth="1.300" />
      </svg>
      <svg width="16" height="14" viewBox="0 0 16 14" className="ml-[9px]" aria-hidden="true">
        <path d="M0 10h3v3H0zM3.200 8.500h3V13h-3zM6.400 6.500h3V13h-3zM9.600 4h3v9h-3zM12.800 1.500h3V13h-3z" fill="#fff" stroke="#48586c" strokeWidth=".6" />
      </svg>
      <svg width="16" height="17" viewBox="0 0 16 17" className="ml-[8px]" aria-hidden="true">
        <path d="M1.500 3h7v12h-7zM3 1h5v2H3z" fill="#98a6b8" stroke="#3c444f" />
        <path d="M10 1v4m3-4v4M8 5h7v4l-2 2h-3L8 9zM11.500 11v3.500H8" fill="#fff" stroke="#fff" strokeWidth="1.300" />
        <path d="m2 8 6.500 7m0-7L2 15" stroke="#e31818" strokeWidth="2.600" />
      </svg>
      <svg width="10" height="6" viewBox="0 0 10 6" className="ml-3" aria-hidden="true">
        <path d="M.8 5.300 5 1l4.200 4.300z" fill="#fff" stroke="#4c5c70" strokeWidth=".6" />
      </svg>
      <span className="mb-1 ml-[14px] text-[12px]">EN</span>
    </div>
  </footer>
);

export default function App() {
  return (
    <div className="flex min-h-screen flex-col bg-[#cdcdcd] font-['Liberation_Sans','DejaVu_Sans',sans-serif]">
      <div dir="rtl" className="font-['Open_Sans','DejaVu_Sans',sans-serif]">
        <TabStrip />
        <Toolbar />
        <BookmarksBar />
        <TranslateBar />
      </div>
      <PortalHeader />
      <Portal />
      <Taskbar />
    </div>
  );
}
